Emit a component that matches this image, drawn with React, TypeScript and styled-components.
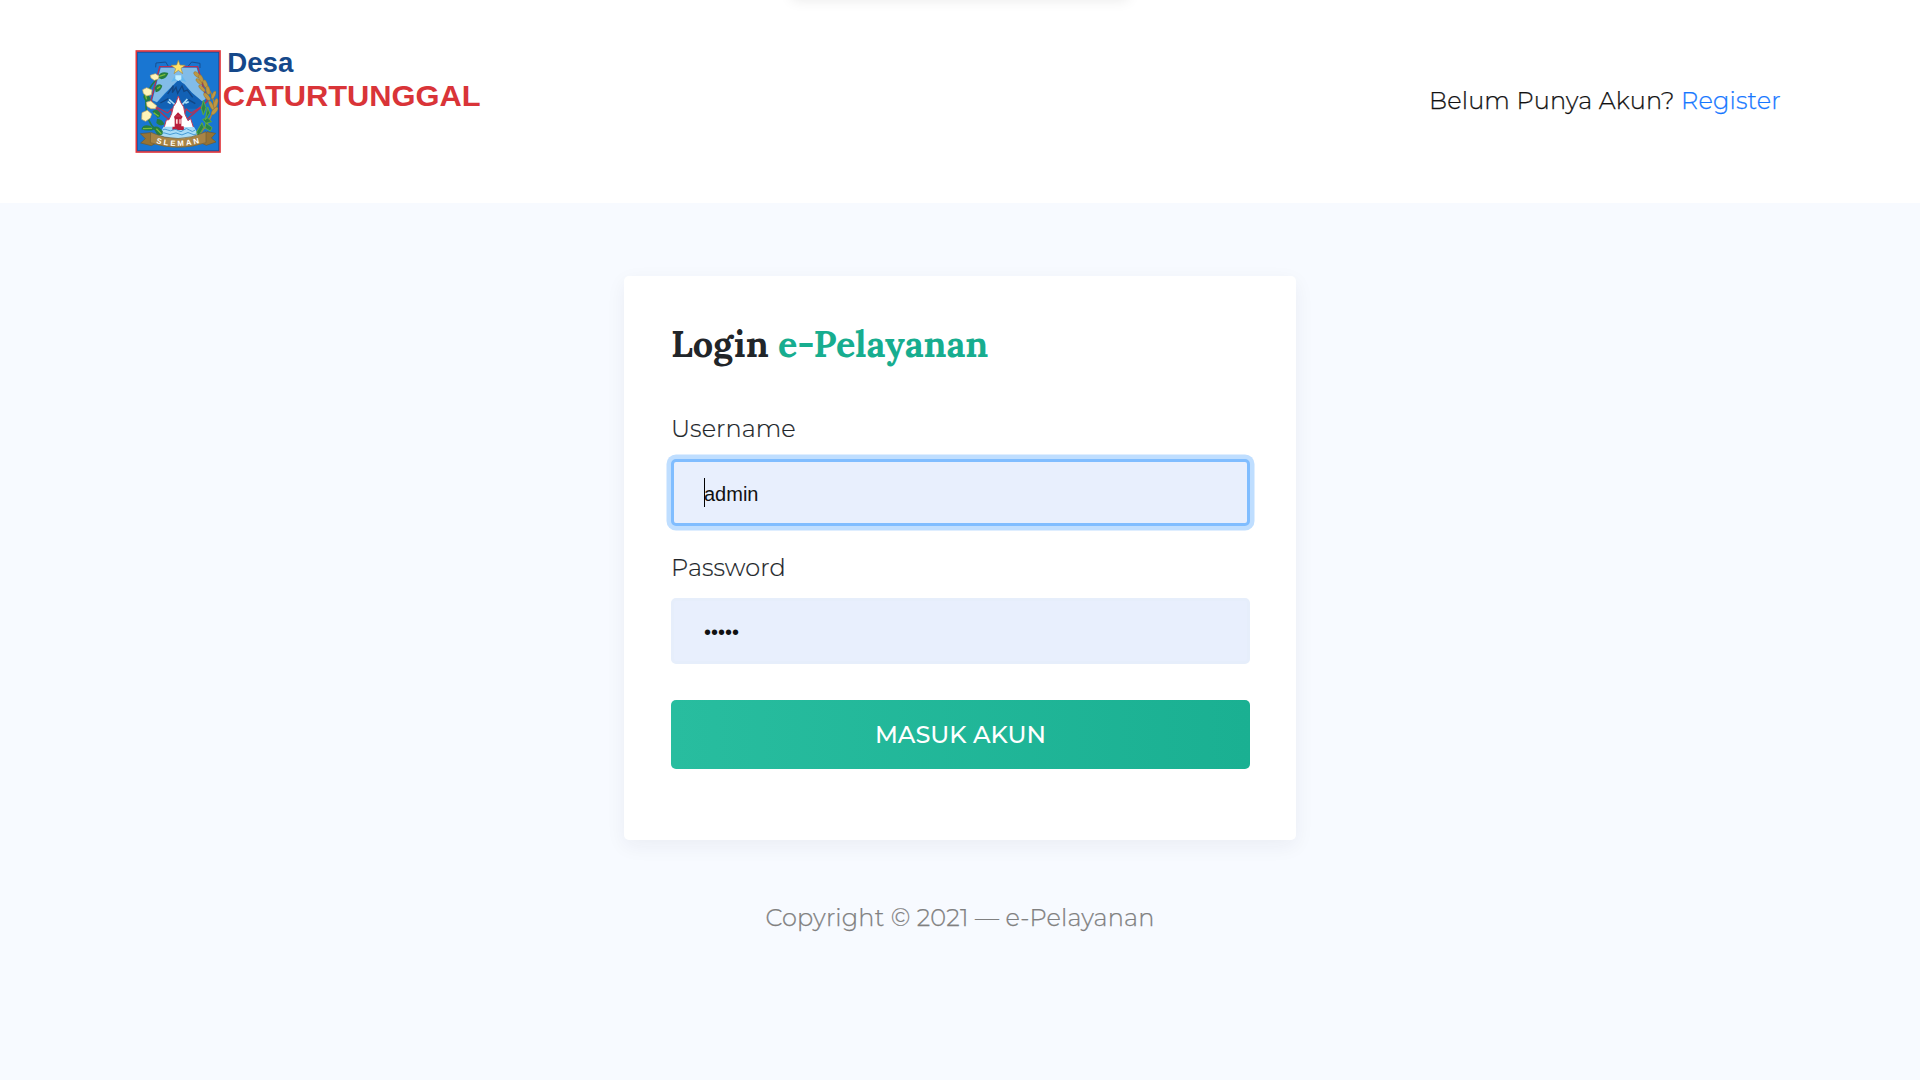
import React from "react";
import styled, { createGlobalStyle } from "styled-components";

const sans = `Montserrat, Inter, "Open Sans", sans-serif`;
const serif = `Lora, "Liberation Serif", serif`;
const arial = `Arial, "Liberation Sans", sans-serif`;

const GlobalStyle = createGlobalStyle`
  * { box-sizing: border-box; }
  body {
    margin: 0;
    min-height: 100vh;
    background: #f7faff;
    color: #212529;
    font-family: ${sans};
    font-size: 24px;
    font-weight: 300;
    line-height: 36px;
  }
`;

const Header = styled.header`
  position: relative;
  display: flex;
  align-items: center;
  justify-content: space-between;
  height: 203px;
  padding: 0 139px 0 135px;
  background: #fff;
  overflow: hidden;
`;

const TopShadow = styled.div`
  position: absolute;
  left: 792px;
  top: -20px;
  width: 336px;
  height: 20px;
  box-shadow: 0 0 14px rgba(0, 0, 0, 0.09);
`;

const Logo = styled.svg`
  display: block;
  width: 350px;
  height: 110px;
  margin-top: 5px;
`;

const Account = styled.p`
  margin: 0 0 2px;
  color: #111;
  letter-spacing: 0.17px;
  -webkit-text-stroke: 0.25px currentColor;
  white-space: nowrap;
`;

const RegisterLink = styled.a`
  color: #1677ff;
  text-decoration: none;
`;

const Main = styled.main`
  display: flex;
  flex-direction: column;
  align-items: center;
  padding-top: 73px;
`;

const Card = styled.section`
  width: 672px;
  height: 564px;
  padding: 45px 46px 0 47px;
  background: #fff;
  border-radius: 5px;
  box-shadow: 0 6px 20px rgba(30, 40, 70, 0.06);
`;

const Title = styled.h1`
  margin: 0 0 44px;
  font-family: ${serif};
  font-size: 36px;
  font-weight: 700;
  line-height: 46px;
  color: #212529;
`;

const Accent = styled.span`
  color: #17ad8f;
`;

const Field = styled.div<{ $gap: number }>`
  display: flex;
  flex-direction: column;
  margin-bottom: ${(p) => p.$gap}px;
`;

const Label = styled.label`
  height: 36px;
  margin-bottom: 12px;
  letter-spacing: 0.08px;
  -webkit-text-stroke: 0.2px currentColor;
`;

const InputWrap = styled.div`
  position: relative;
  display: flex;
`;

const Input = styled.input<{ $focused?: boolean }>`
  width: 100%;
  height: ${(p) => (p.$focused ? 67 : 66)}px;
  padding: ${(p) => (p.$focused ? 3 : 2)}px 30px 0;
  border: 3px solid ${(p) => (p.$focused ? "#80bdff" : "#e6eefb")};
  border-radius: 5px;
  outline: none;
  background: #e8effd;
  box-shadow: ${(p) => (p.$focused ? "0 0 0 4.5px #bfdeff" : "none")};
  color: #111;
  font-family: ${arial};
  font-size: 20px;
`;

const Caret = styled.span`
  position: absolute;
  left: 33px;
  top: 19px;
  width: 1px;
  height: 29px;
  background: #000;
`;

const Submit = styled.button`
  display: block;
  width: 100%;
  height: 69px;
  padding: 0;
  border: 0;
  border-radius: 5px;
  background: linear-gradient(to right, #28bd9f, #1ab092);
  color: #fff;
  font-family: ${sans};
  font-size: 24px;
  font-weight: 500;
  line-height: 69px;
`;

const Footer = styled.footer`
  margin-top: 60px;
  color: #808080;
  letter-spacing: 0.17px;
  -webkit-text-stroke: 0.25px currentColor;
`;

const Crest = () => (
  <g>
    <rect x="34" y="33" width="251" height="303" fill="#1976d2" stroke="#e0353b" strokeWidth="5" />
    <rect x="38" y="37" width="243" height="295" fill="none" stroke="#214a91" strokeWidth="2" />
    <path d="M92 82 93 69 122 66 130 79M190 78 200 66 225 70 225 84" fill="none" stroke="#174f91" strokeWidth="3" />
    <path d="M104 80H218L247 183 225 205 158 262 92 204 78 182Z" fill="#1870c5" stroke="#b33155" strokeWidth="4" />
    <path d="M107 83H215L242 177 226 187 196 155 162 118 120 160 96 187 82 181Z" fill="#82bce8" />
    <path d="M92 192 120 164 142 140 160 122 178 132 201 158 235 187 216 206 104 206Z" fill="#1261b5" />
    <path d="M128 162 145 137 142 158 153 142 158 160 171 138 177 154 187 150 203 172M106 189 130 176M190 179 211 191" fill="none" stroke="#124683" strokeWidth="4" />
    <path d="M138 126 151 106H170L184 126 160 119Z" fill="#66b9ef" />
    <path d="M151 106H169V118L160 123 151 117Z" fill="#c4efff" />
    <path d="M160 61 165 75 181 76 168 85 173 101 160 91 147 101 152 86 138 76 155 75Z" fill="#ffe36c" stroke="#a58944" strokeWidth="2" />
    <path d="M94 201 128 219 139 208 148 234M226 202 199 219 184 207 173 233" fill="none" stroke="#ba3157" strokeWidth="4" />
    <path d="M132 178 151 195M187 177 170 196M137 191 128 185M181 190 191 185" stroke="#a9dcf6" strokeWidth="5" fill="none" />
    <path d="M117 264 124 240 132 239 140 221 145 200 153 188 160 168 167 187 176 201 180 223 189 242 197 236 206 264Z" fill="#fff" stroke="#c33c58" strokeWidth="3" />
    <path d="M147 230 159 217 173 230 169 237 169 259H176V270H142V260H149V237Z" fill="#b81e3a" />
    <path d="M153 238H158V251H153ZM163 238H167V251H163ZM151 228H167" fill="#fff1ed" stroke="#e67c87" />
    <path d="M116 260H142V270H177V261H207L225 291Q158 305 100 286Z" fill="#a9dcf7" />
    <path d="M112 270Q120 265 128 270T144 270 160 272 176 270 193 270 211 270M107 281Q117 276 126 281T144 281 162 282 180 281 198 281 216 281" fill="none" stroke="#479bd4" strokeWidth="3" />
    <path d="M102 111Q51 156 66 219 72 263 112 283" fill="none" stroke="#247b43" strokeWidth="5" />
    <path d="M101 106Q110 92 130 99 126 115 110 118L99 113ZM89 143Q99 126 112 137 109 152 92 157ZM63 185Q48 170 61 157 76 167 77 181ZM82 214Q94 204 103 216 111 230 98 234ZM96 236Q112 237 118 253 105 261 94 249ZM76 258Q55 250 49 268 67 275 88 269ZM84 262Q99 253 114 275 110 289 97 285Z" fill="#257d40" />
    <path d="M103 109 121 103M96 146 106 139M65 178 60 162M86 218 101 229M54 266 81 265M94 266 109 281" stroke="#7abb38" strokeWidth="4" />
    <g fill="#fff4b9" stroke="#cba963" strokeWidth="2">
      <path d="M76 106 91 101 102 108 100 117 88 121 78 114Z" />
      <path d="M53 149 65 143 81 150 79 164 65 168 55 160Z" />
      <path d="M64 187 77 183 95 197 91 206 78 206 66 199Z" />
      <path d="M51 218 67 211 80 222 76 234 62 244 50 238Z" />
    </g>
    <path d="M211 101Q255 134 266 184 267 237 220 286" fill="none" stroke="#aa8437" strokeWidth="4" />
    <g fill="#bd9745" stroke="#80672c" strokeWidth="1">
      <ellipse cx="216" cy="104" rx="6" ry="12" transform="rotate(-48 216 104)" />
      <ellipse cx="228" cy="116" rx="6" ry="13" transform="rotate(-25 228 116)" />
      <ellipse cx="222" cy="125" rx="5" ry="12" transform="rotate(-45 222 125)" />
      <ellipse cx="241" cy="132" rx="6" ry="13" transform="rotate(-22 241 132)" />
      <ellipse cx="231" cy="145" rx="5" ry="13" transform="rotate(-45 231 145)" />
      <ellipse cx="249" cy="151" rx="6" ry="13" transform="rotate(-10 249 151)" />
      <ellipse cx="246" cy="170" rx="6" ry="14" transform="rotate(-40 246 170)" />
      <ellipse cx="266" cy="165" rx="5" ry="13" transform="rotate(24 266 165)" />
      <ellipse cx="272" cy="190" rx="6" ry="15" transform="rotate(15 272 190)" />
      <ellipse cx="259" cy="196" rx="5" ry="15" transform="rotate(-25 259 196)" />
      <ellipse cx="269" cy="213" rx="6" ry="14" transform="rotate(38 269 213)" />
    </g>
    <path d="M235 181 243 203 235 225 229 205ZM248 201 254 219 241 240ZM233 238 248 234 260 245 243 250ZM243 249 261 263 256 273 240 264ZM231 248 236 262 220 289 215 276Z" fill="#28854a" stroke="#5aab43" strokeWidth="3" />
    <path d="M46 281 75 278 82 287 94 285V309L79 317 47 309 61 296ZM272 280 246 275 236 285 225 287 229 309 244 316 273 306 259 294Z" fill="#967334" stroke="#6b5933" strokeWidth="2" />
    <path d="M77 277Q159 315 243 275V308Q159 336 76 308Z" fill="#a98445" stroke="#715f37" strokeWidth="2" />
    <path id="ribbon" d="M93 309Q159 328 231 307" fill="none" />
    <text fontFamily={arial} fontSize="23" fontWeight="700" fill="#fff" textLength="132">
      <textPath href="#ribbon" textLength="132">SLEMAN</textPath>
    </text>
  </g>
);

export default function App() {
  return (
    <>
      <GlobalStyle />
      <Header>
        <TopShadow />
        <Logo viewBox="30 27 1050 330" role="img" aria-label="Desa Caturtunggal">
          <Crest />
          <text x="307" y="97" fontFamily={arial} fontSize="81" fontWeight="700" fill="#15488a" textLength="198" lengthAdjust="spacingAndGlyphs">Desa</text>
          <text x="293" y="199" fontFamily={arial} fontSize="86" fontWeight="700" fill="#d93438" textLength="774" lengthAdjust="spacingAndGlyphs">CATURTUNGGAL</text>
        </Logo>
        <Account>
          Belum Punya Akun? <RegisterLink>Register</RegisterLink>
        </Account>
      </Header>
      <Main>
        <Card>
          <Title>Login <Accent>e-Pelayanan</Accent></Title>
          <Field $gap={24}>
            <Label htmlFor="username">Username</Label>
            <InputWrap>
              <Input id="username" $focused defaultValue="admin" />
              <Caret />
            </InputWrap>
          </Field>
          <Field $gap={36}>
            <Label htmlFor="password">Password</Label>
            <InputWrap>
              <Input id="password" type="password" defaultValue="admin" />
            </InputWrap>
          </Field>
          <Submit>MASUK AKUN</Submit>
        </Card>
        <Footer>Copyright © 2021 — e-Pelayanan</Footer>
      </Main>
    </>
  );
}
